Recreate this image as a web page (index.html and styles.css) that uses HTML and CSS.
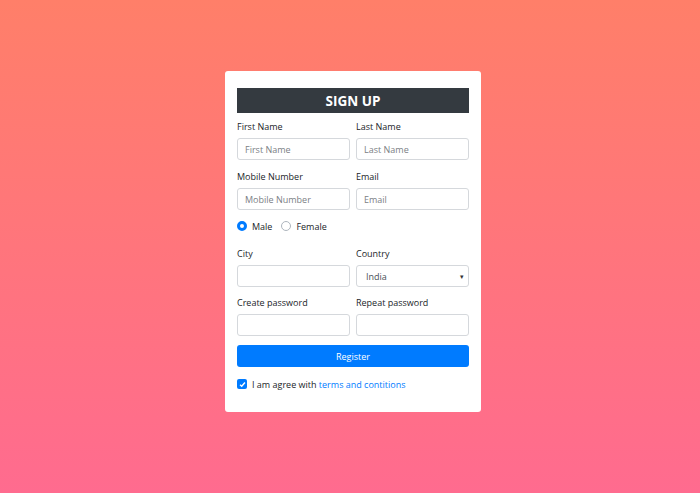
FILE: index.html
```html
<!DOCTYPE html>
<html lang="en">
    <head>
        <title>Sign up</title>
        <link rel="stylesheet" href="styles.css">
    </head>
    <body>
        <div class="page">
            <form class="card" name="signup">
                <h2 class="title">SIGN UP</h2>
                <div class="row">
                    <div class="field">
                        <label>First Name</label>
                        <input type="text" placeholder="First Name">
                    </div>
                    <div class="field">
                        <label>Last Name</label>
                        <input type="text" placeholder="Last Name">
                    </div>
                </div>
                <div class="row row-mobile">
                    <div class="field">
                        <label>Mobile Number</label>
                        <input type="text" placeholder="Mobile Number">
                    </div>
                    <div class="field">
                        <label>Email</label>
                        <input type="text" placeholder="Email">
                    </div>
                </div>
                <div class="gender">
                    <span class="opt"><span class="radio on"></span>Male</span>
                    <span class="opt"><span class="radio"></span>Female</span>
                </div>
                <div class="row row-city">
                    <div class="field">
                        <label>City</label>
                        <input type="text">
                    </div>
                    <div class="field">
                        <label>Country</label>
                        <div class="select">India<span class="caret">&#9662;</span></div>
                    </div>
                </div>
                <div class="row row-pass">
                    <div class="field">
                        <label>Create password</label>
                        <input type="password">
                    </div>
                    <div class="field">
                        <label>Repeat password</label>
                        <input type="password">
                    </div>
                </div>
                <button type="button" class="btn">Register</button>
                <div class="agree">
                    <span class="check">
                        <svg width="7" height="7" viewBox="0 0 8 8"><path d="M1.2 4.3 L3.1 6 L6.8 1.8" fill="none" stroke="#fff" stroke-width="1.6"/></svg>
                    </span>
                    <span>I am agree with <a href="#">terms and contitions</a></span>
                </div>
            </form>
        </div>
    </body>
</html>
```

FILE: styles.css
```css
html, body {
    margin: 0;
    height: 100%;
}
body {
    background: linear-gradient(#ff7f69, #ff6b8f);
    font-family: "Open Sans", "Noto Sans", sans-serif;
    color: #212529;
}
.page {
    display: flex;
    justify-content: center;
    padding-top: 71px;
    padding-left: 6px;
}
.card {
    width: 232px;
    background: #fff;
    border-radius: 3px;
    padding: 17px 12px 22px 12px;
}
.title {
    margin: 0 0 8px 0;
    height: 25px;
    line-height: 26px;
    background: #343a40;
    color: #fff;
    text-align: center;
    font-size: 13.5px;
    font-weight: 700;
}
.row {
    display: grid;
    grid-template-columns: 1fr 1fr;
    column-gap: 6px;
    margin-bottom: 11px;
}
.row-mobile {
    margin-bottom: 10px;
}
.row-city {
    margin-bottom: 10px;
}
.row-pass {
    margin-bottom: 9px;
}
.field label {
    display: block;
    font-size: 9px;
    line-height: 12px;
    margin-bottom: 5px;
}
.field input, .select {
    box-sizing: border-box;
    width: 100%;
    height: 22px;
    border: 1px solid #d5d8dc;
    border-radius: 3px;
    padding: 0 7px;
    font-family: inherit;
    font-size: 9px;
    color: #495057;
    outline: none;
    display: block;
}
.field input::placeholder {
    color: #7b8085;
}
.select {
    display: flex;
    align-items: center;
    justify-content: space-between;
    padding: 0 4px 0 9px;
}
.caret {
    font-size: 7px;
    color: #333;
}
.gender {
    display: flex;
    align-items: center;
    height: 12px;
    margin-bottom: 16px;
    font-size: 9px;
}
.opt {
    display: flex;
    align-items: center;
    margin-right: 9px;
}
.radio {
    box-sizing: border-box;
    width: 10px;
    height: 10px;
    border-radius: 50%;
    border: 1px solid #adb5bd;
    margin-right: 5px;
}
.radio.on {
    border: 3px solid #007bff;
    background: #fff;
}
.btn {
    display: block;
    width: 100%;
    height: 22px;
    border: none;
    border-radius: 3px;
    background: #007bff;
    color: #fff;
    font-family: inherit;
    font-size: 9px;
    margin-bottom: 11px;
}
.agree {
    display: flex;
    align-items: center;
    height: 12px;
    font-size: 9px;
}
.check {
    width: 10px;
    height: 10px;
    border-radius: 2px;
    background: #007bff;
    display: inline-flex;
    align-items: center;
    justify-content: center;
    margin-right: 5px;
}
.agree a {
    color: #007bff;
    text-decoration: none;
}
```
